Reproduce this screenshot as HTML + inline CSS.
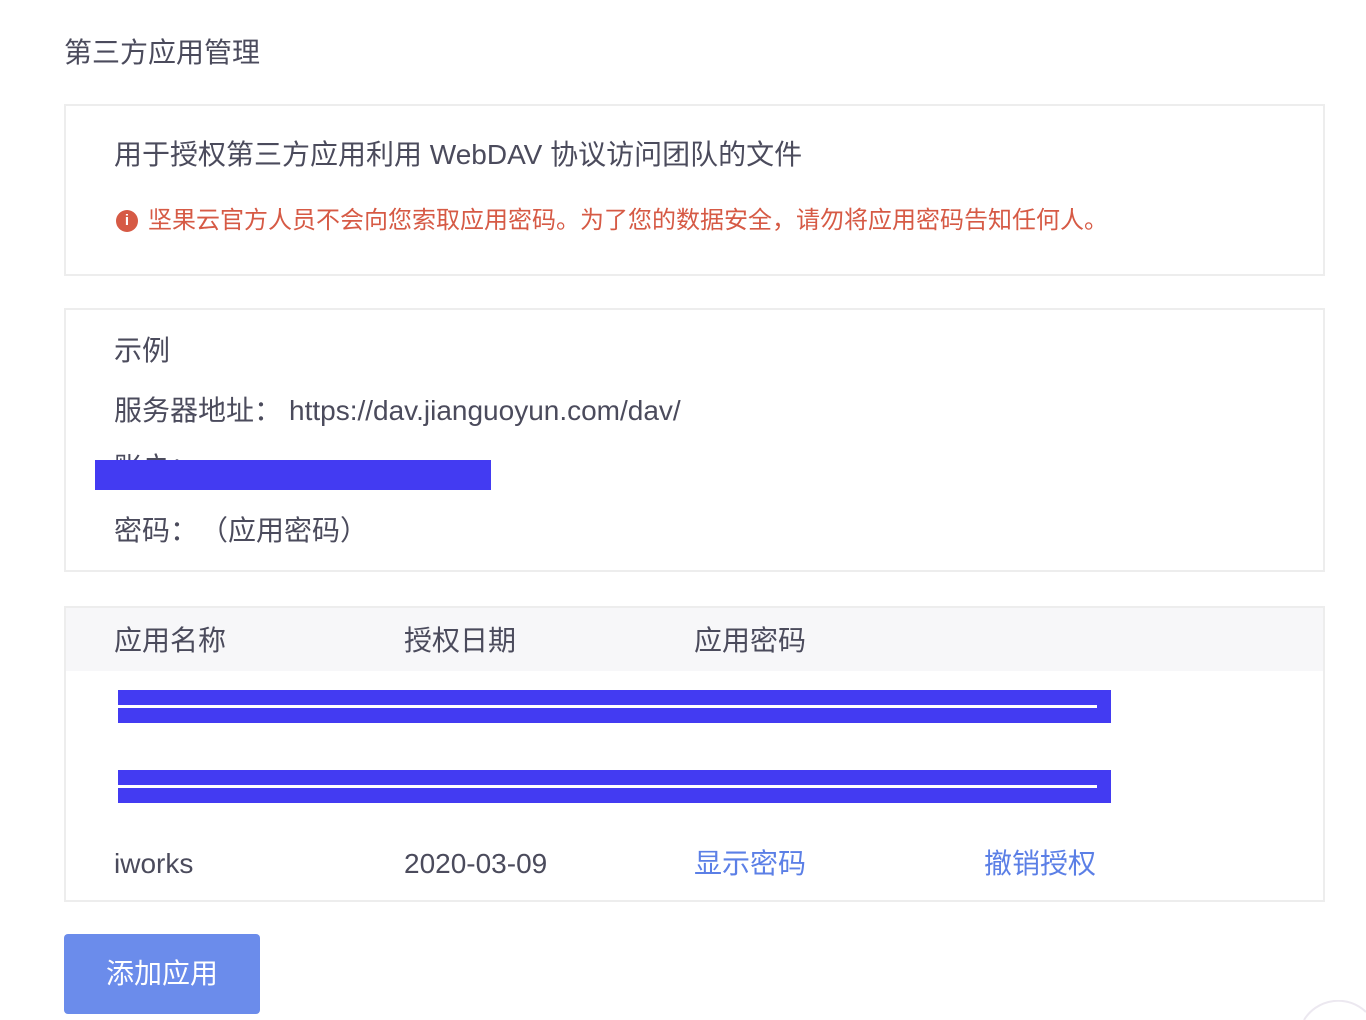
<!DOCTYPE html>
<html><head><meta charset="utf-8"><style>
*{margin:0;padding:0;box-sizing:border-box}
html,body{width:1366px;height:1020px;overflow:hidden}
body{background:#fff;font-family:"Liberation Sans","Noto Sans CJK SC",sans-serif;color:#4b4b5c;position:relative}
.a{position:absolute;white-space:nowrap}
.box{position:absolute;left:64px;width:1261px;border:2px solid #ededed}
.t{font-size:28px;line-height:30px}
.blue{color:#5b7fe6}
.bar{position:absolute;background:#433bf2}
</style></head><body>
<div class="a t" style="left:64px;top:38px">第三方应用管理</div>
<div class="box" style="top:104px;height:172px"></div>
<div class="a t" style="left:114px;top:140px">用于授权第三方应用利用 WebDAV 协议访问团队的文件</div>
<div class="a" style="left:116px;top:210px;width:22px;height:22px;border-radius:50%;background:#d65a45;color:#fff;font-size:15px;font-weight:bold;text-align:center;line-height:22px">i</div>
<div class="a" style="left:148px;top:206px;font-size:24px;line-height:30px;color:#d65a45">坚果云官方人员不会向您索取应用密码。为了您的数据安全，请勿将应用密码告知任何人。</div>
<div class="box" style="top:308px;height:264px"></div>
<div class="a t" style="left:114px;top:336px">示例</div>
<div class="a t" style="left:114px;top:396px">服务器地址：</div>
<div class="a t" style="left:289px;top:396px">https://dav.jianguoyun.com/dav/</div>
<div class="a t" style="left:114px;top:453px">账户：</div>
<div class="bar" style="left:95px;top:460px;width:396px;height:30px"></div>
<div class="a t" style="left:114px;top:516px">密码：</div>
<div class="a t" style="left:200px;top:516px">（应用密码）</div>
<div class="box" style="top:606px;height:296px"></div>
<div class="a" style="left:66px;top:608px;width:1257px;height:63px;background:#f7f7f9"></div>
<div class="a t" style="left:114px;top:626px">应用名称</div>
<div class="a t" style="left:404px;top:626px">授权日期</div>
<div class="a t" style="left:694px;top:626px">应用密码</div>
<div class="bar" style="left:118px;top:690px;width:993px;height:33px"></div>
<div class="a" style="left:118px;top:705px;width:979px;height:3px;background:#fff"></div>
<div class="bar" style="left:118px;top:770px;width:993px;height:33px"></div>
<div class="a" style="left:118px;top:785px;width:979px;height:3px;background:#fff"></div>
<div class="a t" style="left:114px;top:849px">iworks</div>
<div class="a t" style="left:404px;top:849px">2020-03-09</div>
<div class="a t blue" style="left:694px;top:849px">显示密码</div>
<div class="a t blue" style="left:984px;top:849px">撤销授权</div>
<div class="a" style="left:64px;top:934px;width:196px;height:80px;background:#6b8ceb;border-radius:4px;color:#fff;font-size:28px;line-height:80px;text-align:center">添加应用</div>
<svg class="a" style="left:1290px;top:1000px" width="76" height="20"><path d="M14 20 A40 40 0 0 1 76 12" fill="none" stroke="#ece8f0" stroke-width="2"/></svg>
</body></html>
